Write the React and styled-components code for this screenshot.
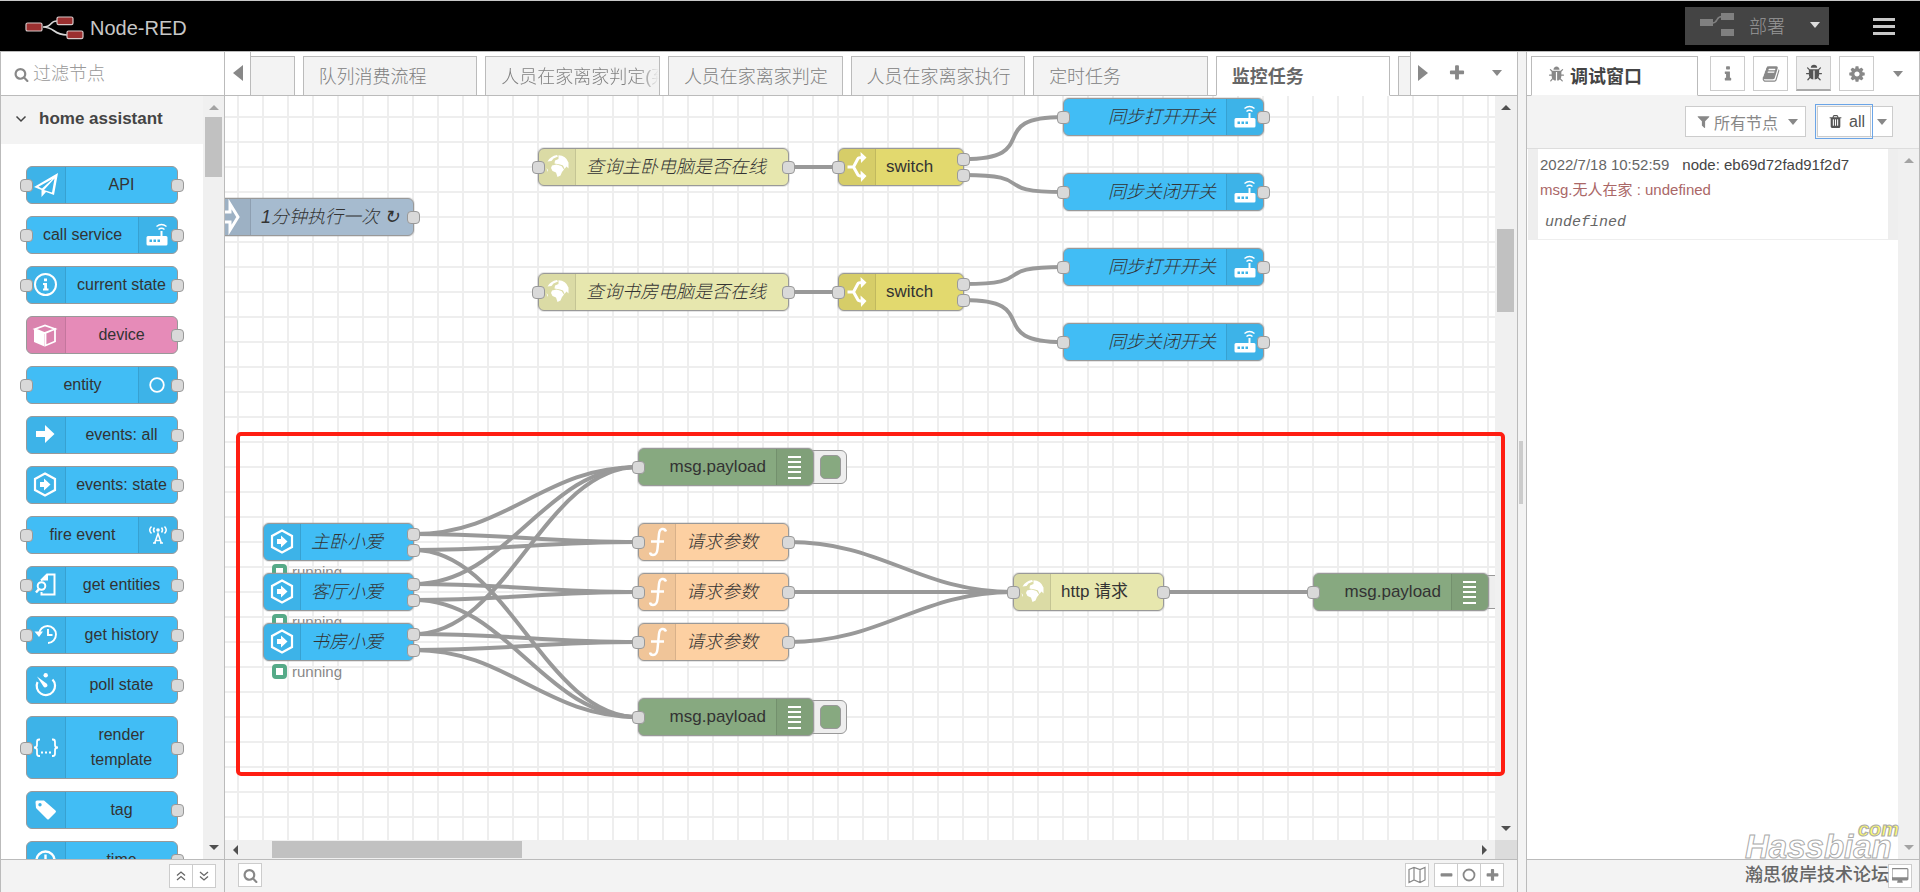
import styled, { createGlobalStyle, css } from "styled-components";

const GlobalStyle = createGlobalStyle`
  *,
  *::before {
    box-sizing: border-box;
  }

  body {
    margin: 0;
    background: #f3f3f3;
    color: #333;
    font-family: "Liberation Sans", Arial, "Noto Sans CJK SC", sans-serif;
    font-size: 17px;
  }

  button,
  input {
    font: inherit;
    color: inherit;
    margin: 0;
    padding: 0;
    border: 0;
    background: none;
  }
`;

const BLUE = "#41bdf5";
const PINK = "#e68bb8";
const GREEN = "#87a980";
const ORANGE = "#fdd0a2";
const KHAKI = "#e7e7ae";
const YELLOW = "#e2d96e";
const STEEL = "#a6bbcf";

/* ---------- icons ---------- */

const FA_PATHS = {
  search:
    "M1216 832q0-185-131.5-316.5t-316.5-131.5-316.5 131.5-131.5 316.5 131.5 316.5 316.5 131.5 316.5-131.5 131.5-316.5zm512 832q0 52-38 90t-90 38q-54 0-90-38l-343-342q-179 124-399 124-143 0-273.5-55.5t-225-150-150-225-55.5-273.5 55.5-273.5 150-225 225-150 273.5-55.5 273.5 55.5 225 150 150 225 55.5 273.5q0 220-124 399l343 343q37 37 37 90z",
  plus: "M1600 736v192q0 40-28 68t-68 28h-416v416q0 40-28 68t-68 28h-192q-40 0-68-28t-28-68v-416h-416q-40 0-68-28t-28-68v-192q0-40 28-68t68-28h416v-416q0-40 28-68t68-28h192q40 0 68 28t28 68v416h416q40 0 68 28t28 68z",
  minus:
    "M1600 736v192q0 40-28 68t-68 28h-1216q-40 0-68-28t-28-68v-192q0-40 28-68t68-28h1216q40 0 68 28t28 68z",
  bug: "M1696 960q0 26-19 45t-45 19h-224q0 171-67 290l208 209q19 19 19 45t-19 45q-18 19-45 19t-45-19l-198-197q-5 5-15 13t-42 28.5-65 36.5-82 29-97 13v-896h-128v896q-51 0-101.5-13.5t-87-33-66-39-43.5-32.5l-15-14-183 207q-20 21-48 21-24 0-43-16-19-18-20.5-44.5t15.5-46.5l202-227q-58-114-58-274h-224q-26 0-45-19t-19-45 19-45 45-19h224v-294l-173-173q-19-19-19-45t19-45 45-19 45 19l173 173h844l173-173q19-19 45-19t45 19 19 45-19 45l-173 173v294h224q26 0 45 19t19 45zm-480-576h-640q0-133 93.5-226.5t226.5-93.5 226.5 93.5 93.5 226.5z",
  info: "M1216 1344v128q0 26-19 45t-45 19h-512q-26 0-45-19t-19-45v-128q0-26 19-45t45-19h64v-384h-64q-26 0-45-19t-19-45v-128q0-26 19-45t45-19h384q26 0 45 19t19 45v576h64q26 0 45 19t19 45zm-128-1152v192q0 26-19 45t-45 19h-256q-26 0-45-19t-19-45v-192q0-26 19-45t45-19h256q26 0 45 19t19 45z",
  book: "M1703 478q40 57 18 129l-275 906q-19 64-76.5 107.5t-122.5 43.5h-923q-77 0-148.5-53.5t-99.5-131.5q-24-67-2-127 0-4 3-27t4-37q1-8-3-21.5t-3-19.5q2-11 8-21t16.5-23.5 16.5-23.5q23-38 45-91.5t30-91.5q3-10 .5-30t-.5-28q3-11 17-28t17-23q21-36 42-92t25-90q1-9-2.5-32t.5-28q4-13 22-30.5t22-22.5q19-26 42.5-84.5t27.5-96.5q1-8-3-25.5t-2-26.5q2-8 9-18t18-23 17-21q8-12 16.5-30.5t15-35 16-36 19.5-32 26.5-23.5 36-11.5 47.5 5.5l-1 3q38-9 51-9h761q74 0 114 56t18 130l-274 906q-36 119-71.5 153.5t-128.5 34.5h-869q-27 0-38 15-11 16-1 43 24 70 144 70h923q29 0 56-15.5t35-41.5l300-987q7-22 5-57 38 15 59 43zm-1064 2q-4 13 2 22.5t20 9.5h608q13 0 25.5-9.5t16.5-22.5l21-64q4-13-2-22.5t-20-9.5h-608q-13 0-25.5 9.5t-16.5 22.5zm-83 256q-4 13 2 22.5t20 9.5h608q13 0 25.5-9.5t16.5-22.5l21-64q4-13-2-22.5t-20-9.5h-608q-13 0-25.5 9.5t-16.5 22.5z",
  cog: "M1152 896q0-106-75-181t-181-75-181 75-75 181 75 181 181 75 181-75 75-181zm512-109v222q0 12-8 23t-20 13l-185 28q-19 54-39 91 35 50 107 138 10 12 10 25t-9 23q-27 37-99 108t-94 71q-12 0-26-9l-138-108q-44 23-91 38-16 136-29 186-7 28-36 28h-222q-14 0-24.5-8.5t-11.5-21.5l-28-184q-49-16-90-37l-141 107q-10 9-25 9-14 0-25-11-126-114-165-168-7-10-7-23 0-12 8-23 15-21 51-66.5t54-70.5q-27-50-41-99l-183-27q-13-2-21-12.5t-8-23.5v-222q0-12 8-23t19-13l186-28q14-46 39-92-40-57-107-138-10-12-10-24 0-10 9-23 26-36 98.5-107.5t94.5-71.5q13 0 26 10l138 107q44-23 91-38 16-136 29-186 7-28 36-28h222q14 0 24.5 8.5t11.5 21.5l28 184q49 16 90 37l142-107q9-9 24-9 13 0 25 10 129 119 165 170 7 8 7 22 0 12-8 23-15 21-51 66.5t-54 70.5q26 50 41 98l183 28q13 2 21 12.5t8 23.5z",
  filter:
    "M1595 295q17 41-14 70l-493 493v742q0 42-39 59-13 5-25 5-27 0-45-19l-256-256q-19-19-19-45v-486l-493-493q-31-29-14-70 17-39 59-39h1280q42 0 59 39z",
  trash:
    "M704 1376v-704q0-14-9-23t-23-9h-64q-14 0-23 9t-9 23v704q0 14 9 23t23 9h64q14 0 23-9t9-23zm256 0v-704q0-14-9-23t-23-9h-64q-14 0-23 9t-9 23v704q0 14 9 23t23 9h64q14 0 23-9t9-23zm256 0v-704q0-14-9-23t-23-9h-64q-14 0-23 9t-9 23v704q0 14 9 23t23 9h64q14 0 23-9t9-23zm-544-992h448l-48-117q-7-9-17-11h-317q-10 2-17 11zm928 32v64q0 14-9 23t-23 9h-96v948q0 83-47 143.5t-113 60.5h-832q-66 0-113-58.5t-47-141.5v-952h-96q-14 0-23-9t-9-23v-64q0-14 9-23t23-9h309l70-167q15-37 54-63t79-26h320q40 0 79 26t54 63l70 167h309q14 0 23 9t9 23z",
  desktop:
    "M1728 992v-832q0-13-9.5-22.5t-22.5-9.5h-1600q-13 0-22.5 9.5t-9.5 22.5v832q0 13 9.5 22.5t22.5 9.5h1600q13 0 22.5-9.5t9.5-22.5zm128-832v1088q0 66-47 113t-113 47h-544q0 37 16 77.5t32 71 16 43.5q0 26-19 45t-45 19h-512q-26 0-45-19t-19-45q0-14 16-44t32-70 16-78h-544q-66 0-113-47t-47-113v-1088q0-66 47-113t113-47h1600q66 0 113 47t47 113z",
};

const Fa = ({ name, size = 18 }) => (
  <svg width={size} height={size} viewBox="0 0 1792 1792" fill="currentColor" aria-hidden="true">
    <path d={FA_PATHS[name]} />
  </svg>
);

const Logo = () => (
  <svg width="60" height="25" viewBox="0 0 60 25" aria-hidden="true">
    <path d="M18 11C28 11 24 5 32 5M18 11C30 11 28 19 42 19" fill="none" stroke="#d8d8d8" strokeWidth="1.6" />
    <g fill="#9b3030" stroke="#d8c8c8" strokeWidth="1.2">
      <rect x="1" y="7" width="16" height="8" rx="1.6" />
      <rect x="32" y="1" width="16" height="7.6" rx="1.6" />
      <rect x="42" y="15" width="16" height="7.6" rx="1.6" />
    </g>
  </svg>
);

const DeployIcon = () => (
  <svg width="34" height="24" viewBox="0 0 34 24" fill="#808080" aria-hidden="true">
    <rect x="0" y="6" width="13" height="7" />
    <rect x="21" y="0" width="13" height="7" />
    <rect x="21" y="16" width="13" height="7" />
    <path d="M12 10C19 10 15 3.500 22 3.500" fill="none" stroke="#808080" strokeWidth="1.600" />
  </svg>
);

const MapIcon = () => (
  <svg width="18" height="18" viewBox="0 0 18 18" fill="none" stroke="#888" strokeWidth="1.200" aria-hidden="true">
    <path d="M1 3.500 6 1.500 12 3.500 17 1.500V14L12 16.500 6 14 1 16.500ZM6 1.500V14M12 3.500V16.500" />
  </svg>
);

const Chevrons = ({ down }) => (
  <svg width="10" height="10" viewBox="0 0 10 10" fill="none" stroke="#666" strokeWidth="1.300" aria-hidden="true">
    <path d={down ? "M1 1 5 4.500 9 1M1 5.500 5 9 9 5.500" : "M1 4.500 5 1 9 4.500M1 9 5 5.500 9 9"} />
  </svg>
);

const hexagon = (
  <>
    <path d="M19 7.500 29 13V24L19 29.500 9 24V13Z" fill="none" stroke="#fff" strokeWidth="2.200" />
    <path d="M14 16H18V12.500L24.500 18.500 18 24.500V21H14Z" />
  </>
);

// every glyph sits on a 38x38 cell, the size of the icon strip of a node
const GLYPHS = {
  plane: (
    <path
      fillRule="evenodd"
      d="M8 21 32 7 28 29 20 26 15.500 31V24ZM12.500 20.800 16 22.400 26.500 13ZM28.500 12.500 18 24 26 26.600Z"
    />
  ),
  router: (
    <>
      <path
        fillRule="evenodd"
        d="M10 20H22.500V15H24.500V20H28Q29.500 20 29.500 21.500V28Q29.500 29.500 28 29.500H10Q8.500 29.500 8.500 28V21.500Q8.500 20 10 20ZM11.500 23.500V26H14V23.500ZM15.500 23.500V26H18V23.500ZM19.500 23.500V26H22V23.500Z"
      />
      <path d="M20.500 13.500Q23.500 11 26.500 13.500M18.500 10.500Q23.500 6.500 28.500 10.500" fill="none" stroke="#fff" strokeWidth="1.500" />
    </>
  ),
  info: (
    <>
      <circle cx="19.500" cy="18.500" r="10.500" fill="none" stroke="#fff" strokeWidth="2" />
      <path d="M18 12.500H21V15.200H18ZM17 17H21V22.500H22.500V24.500H17V22.500H18.200V19H17Z" />
    </>
  ),
  cube: (
    <>
      <path d="M8 13 18.500 17V30.500L8 26Z" />
      <path d="M9 13 19 9.500 29 13 18.500 17ZM19.500 17 29 13V25.500L19.500 29.500Z" fill="none" stroke="#fff" strokeWidth="1.800" />
    </>
  ),
  circle: <circle cx="19" cy="19" r="6.800" fill="none" stroke="#fff" strokeWidth="1.800" />,
  arrow: <path d="M10 15H19V9L28.500 18 19 27V21H10Z" />,
  hexagon,
  antenna: (
    <>
      <circle cx="20" cy="14" r="1.800" />
      <path
        d="M16.500 27.500 20 17.500 23.500 27.500M17.500 24.500H22.500M15 27H18M22 27H25M16.500 11.500Q14.500 14 16.500 16.500M23.500 11.500Q25.500 14 23.500 16.500M13.500 10.500Q10 14 13.500 17.500M26.500 10.500Q30 14 26.500 17.500"
        fill="none"
        stroke="#fff"
        strokeWidth="1.500"
      />
    </>
  ),
  entities: (
    <g fill="none" stroke="#fff" strokeWidth="2">
      <path d="M15 14.500 21 8.500H28.500V28.500H15.500V26" />
      <path d="M15 14.500 22 8V14.500Z" fill="#fff" stroke="none" />
      <circle cx="15.500" cy="20" r="3.800" />
      <path d="M13 23 10 26.500" strokeWidth="2.500" />
    </g>
  ),
  history: (
    <>
      <path d="M13 18A8.500 8.500 0 1 1 22 27M22 13V19H26.500" fill="none" stroke="#fff" strokeWidth="1.900" />
      <path d="M8.500 15.500 17 15.500 13 21Z" />
    </>
  ),
  timer: (
    <>
      <path d="M11.500 16A9.200 9.200 0 1 0 26.500 13.500" fill="none" stroke="#fff" strokeWidth="2.200" />
      <path d="M11 10.500 20.500 17.500Q22.500 19.500 20.500 21Q18.500 22 17.500 20.500Z" />
      <circle cx="19.700" cy="9.300" r="2.200" />
    </>
  ),
  braces: (
    <>
      <path
        d="M14 10.500H13Q11 10.500 11 13V16Q11 18.500 8 18.500Q11 18.500 11 21V24.500Q11 27 13 27H14M26 10.500H27Q29 10.500 29 13V16Q29 18.500 32 18.500Q29 18.500 29 21V24.500Q29 27 27 27H26"
        fill="none"
        stroke="#fff"
        strokeWidth="1.800"
      />
      <path d="M15 22.500H17V24.500H15ZM19 22.500H21V24.500H19ZM23 22.500H25V24.500H23Z" />
    </>
  ),
  tag: (
    <path
      fillRule="evenodd"
      d="M9.500 11Q9.500 9.500 11 9.500L18 9.500 29.500 19.500Q30.500 20.500 29.500 21.500L23 28Q22 29 21 28L10 17ZM12.300 13.700A1.700 1.700 0 1 0 15.700 13.700A1.700 1.700 0 1 0 12.300 13.700Z"
    />
  ),
  clock: (
    <path
      d="M19.500 13.500V20H16M10.500 19.500A9 9 0 1 1 28.500 19.500A9 9 0 1 1 10.500 19.500Z"
      fill="none"
      stroke="#fff"
      strokeWidth="2.400"
    />
  ),
  globe: (
    <>
      <path d="M9.500 13.500Q12.500 8 19 7L20 8.500 15.500 10.500 13.500 13ZM20.500 7.200Q28 7.500 30.500 14.500L30.500 20.500 28.500 18.500 26.500 21 25 17.500 22 16.500 16.500 15.500 17 12.500 20.500 11Z" />
      <path d="M14 17.500 18.500 16.500 23.500 18 26 21.500 24 24 22.500 27.500 19.500 29 18 24.500 14.500 23 13 20Z" />
      <path d="M8.500 20 10 22 9.500 24Z" />
    </>
  ),
  split: (
    <>
      <path d="M9.500 19H15.500L20 10.500Q20.500 9.500 24 9.500M15.500 19 20 27Q20.500 28 24 28" fill="none" stroke="#fff" strokeWidth="3" />
      <path d="M22.500 4 28.500 9.500 23 15ZM22.500 22.500 28.500 28 23 34Z" />
    </>
  ),
  func: (
    <path
      d="M28 8.500Q27 5.500 24 6Q21.500 6.500 21 11L19.500 26Q19 32 15 32Q12.500 32 12 29.500M13 18.500H26"
      fill="none"
      stroke="#fff"
      strokeWidth="2.500"
    />
  ),
  lines: <path d="M12 9H25M12 14H25M12 19H25M12 24H25M12 30H25" fill="none" stroke="#fff" strokeWidth="1.800" />,
  inject: <path d="M2 14H17V6L25 19 17 32V24H2" fill="none" stroke="#fff" strokeWidth="3" />,
};

const Glyph = ({ name }) => (
  <svg width="38" height="38" viewBox="0 0 38 38" fill="#fff" aria-hidden="true">
    {GLYPHS[name]}
  </svg>
);

/* ---------- shared parts ---------- */

const Caret = styled.span`
  width: 0;
  height: 0;
  border: 5px solid transparent;
  border-bottom-width: 0;
  border-top: 6px solid ${(p) => p.$color || "#888"};
`;

const SmallButton = styled.button`
  display: flex;
  align-items: center;
  justify-content: center;
  width: 24px;
  height: 24px;
  border: 1px solid #ccc;
  background: #fff;
  color: #888;

  & + & {
    margin-left: -1px;
  }
`;

const Footer = styled.footer`
  display: flex;
  align-items: center;
  height: 33px;
  flex: none;
  border-top: 1px solid #bbb;
  background: #f3f3f3;
`;

const PaletteFooter = styled(Footer)`
  justify-content: flex-end;
  padding: 0 8px;
`;

const Bar = styled.div`
  display: flex;
  flex: none;
  align-items: center;
  justify-content: space-between;
  background: #f0f0f0;
  ${(p) =>
    p.$horizontal
      ? css`
          height: 19px;
          flex: 1;
          padding: 0 8px;
        `
      : css`
          width: 21px;
          flex-direction: column;
          padding: 9px 0;
        `}
`;

const Thumb = styled.div`
  background: #c1c1c1;
  ${(p) =>
    p.$horizontal
      ? css`
          width: 250px;
          height: 17px;
          margin-left: 34px;
          margin-right: auto;
        `
      : css`
          width: 17px;
          height: ${p.$length}px;
          margin-top: ${p.$offset}px;
          margin-bottom: auto;
        `}
`;

const arrowSides = {
  up: "border-bottom: 5px solid; border-top: 0;",
  down: "border-top: 5px solid; border-bottom: 0;",
  left: "border-right: 5px solid; border-left: 0;",
  right: "border-left: 5px solid; border-right: 0;",
};

const Arrow = styled.i`
  width: 0;
  height: 0;
  color: ${(p) => (p.$dim ? "#a3a3a3" : "#505050")};
  border: 5px solid transparent;
  ${(p) => arrowSides[p.$to]}
  ${(p) =>
    p.$to === "up" || p.$to === "down"
      ? "border-left-color: transparent; border-right-color: transparent;"
      : "border-top-color: transparent; border-bottom-color: transparent;"}
`;

/* ---------- page frame ---------- */

const Page = styled.div`
  display: flex;
  flex-direction: column;
  height: 100vh;
  min-height: 500px;
  overflow: hidden;
`;

const Header = styled.header`
  display: flex;
  align-items: center;
  height: 51px;
  flex: none;
  padding: 0 25px;
  border-top: 1px solid #c8c8c8;
  background: #000;
`;

const Brand = styled.h1`
  display: flex;
  align-items: center;
  gap: 5px;
  margin: 0 auto 0 0;
  padding-top: 4px;
  color: #c7c7c7;
  font-size: 20px;
  font-weight: 400;
`;

const DeployButton = styled.button`
  display: flex;
  align-items: center;
  width: 144px;
  height: 38px;
  padding: 0 9px 2px 15px;
  gap: 15px;
  background: #444;
  color: #999;
  font-size: 18px;
  font-weight: 300;

  ${Caret} {
    margin-left: auto;
  }
`;

const MenuButton = styled.button`
  display: flex;
  flex-direction: column;
  gap: 4px;
  width: 22px;
  margin-left: 44px;

  span {
    height: 3px;
    background: #c7c7c7;
  }
`;

const Main = styled.main`
  display: grid;
  grid-template-columns: 225px minmax(0, 1fr) 8px 394px;
  flex: 1;
  min-height: 0;
`;

const Panel = styled.section`
  display: flex;
  flex-direction: column;
  min-width: 0;
  min-height: 0;
  border: solid #bbb;
  border-width: ${(p) => p.$borders};
  background: #fff;
`;

const Separator = styled.div`
  display: flex;
  align-items: center;
  padding-left: 1px;
  border-top: 1px solid #bbb;

  &::before {
    content: "";
    width: 4px;
    height: 63px;
    background: #ccc;
  }
`;

/* ---------- palette ---------- */

const SearchBox = styled.label`
  display: flex;
  align-items: center;
  gap: 4px;
  height: 44px;
  flex: none;
  padding: 2px 13px 0;
  border-bottom: 1px solid #bbb;
  color: #888;

  input {
    flex: 1;
    min-width: 0;
    font-size: 18px;
    font-weight: 300;
    outline: 0;
  }

  input::placeholder {
    color: #999;
    opacity: 1;
  }
`;

const PaletteBody = styled.div`
  display: flex;
  flex: 1;
  min-height: 0;
`;

const PaletteScroll = styled.div`
  flex: 1;
  overflow: hidden;
`;

const CategoryHeader = styled.button`
  display: flex;
  align-items: center;
  gap: 12px;
  width: 100%;
  height: 48px;
  padding: 0 14px 2px;
  background: #f3f3f3;
  color: #444;
  font-weight: 700;
`;

const NodeList = styled.ul`
  display: flex;
  flex-direction: column;
  gap: 12px;
  width: 152px;
  margin: 22px 0 0 25px;
  padding: 0;
  list-style: none;
`;

const IconStrip = styled.span`
  display: flex;
  align-items: center;
  width: 37px;
  flex: none;
  overflow: hidden;
  background: rgba(0, 0, 0, 0.05);
  ${(p) =>
    p.$right
      ? "border-left: 1px solid rgba(0, 0, 0, 0.1); border-radius: 0 5px 5px 0;"
      : "border-right: 1px solid rgba(0, 0, 0, 0.1); border-radius: 5px 0 0 5px;"}

  svg {
    flex: none;
    margin: -1px;
  }
`;

const PaletteNode = styled.li`
  position: relative;
  display: flex;
  flex-direction: ${(p) => (p.$iconRight ? "row-reverse" : "row")};
  flex: none;
  height: ${(p) => (p.$tall ? "63px" : "38px")};
  border: 1px solid #999;
  border-radius: 6px;
  background: ${(p) => p.$color};
  font-size: 16px;
  line-height: 25px;

  ${IconStrip} {
    width: 39px;
  }
`;

const PaletteLabel = styled.span`
  display: flex;
  align-items: center;
  justify-content: center;
  flex: 1;
  padding-bottom: 1px;
  text-align: center;
`;

const Port = styled.i`
  position: absolute;
  top: calc(50% - ${(p) => 6 - (p.$shift || 0)}px);
  ${(p) => (p.$side === "in" ? "left" : "right")}: -7px;
  width: 13px;
  height: 13px;
  border: 1px solid #999;
  border-radius: 4px;
  background: #d9d9d9;
`;

/* ---------- workspace ---------- */

const TabBar = styled.nav`
  display: flex;
  height: 44px;
  flex: none;
  border-bottom: 1px solid #bbb;
`;

const TabScroll = styled.button`
  display: flex;
  align-items: center;
  justify-content: center;
  width: 26px;
  padding-bottom: 2px;
  border-right: 1px solid #bbb;

  i {
    border-width: 8px;
    border-right-width: 10px;
    color: #888;
  }
`;

const TabViewport = styled.div`
  flex: 1;
  min-width: 0;
  overflow: hidden;
  margin-bottom: -1px;
`;

const TabList = styled.div`
  display: flex;
  gap: 8px;
  width: calc(100% + 294px);
  height: 40px;
  margin: 4px 0 0 -131px;
`;

const Tab = styled.button`
  flex: 1;
  min-width: 0;
  overflow: hidden;
  padding: 0 0 3px 15px;
  border: 1px solid #bbb;
  background: #f3f3f3;
  color: #808080;
  font-size: 18px;
  font-weight: 300;
  text-align: left;
  white-space: nowrap;
  ${(p) =>
    p.$fade &&
    css`
      span {
        display: block;
        mask-image: linear-gradient(to right, #000 138px, transparent 158px);
      }
    `}
  ${(p) =>
    p.$active &&
    css`
      border-bottom-color: #fff;
      background: #fff;
      color: #666;
      font-weight: 700;
    `}
`;

const TabTools = styled.div`
  display: flex;
  align-items: center;
  gap: 20px;
  width: 107px;
  padding: 0 15px 2px 7px;
  border-left: 1px solid #bbb;
  color: #888;

  button {
    display: flex;
  }

  button:last-child {
    margin-left: auto;
  }

  i {
    border-width: 8px;
    border-left-width: 10px;
    color: #888;
  }
`;

const CanvasArea = styled.div`
  position: relative;
  display: grid;
  grid-template-columns: minmax(0, 1fr) 22px;
  grid-template-rows: minmax(0, 1fr) 19px;
  flex: 1;
  min-height: 0;
  background: #f0f0f0;
`;

const Canvas = styled.div`
  position: relative;
  overflow: hidden;
  background-color: #fff;
  background-image: linear-gradient(to right, #eee 2px, transparent 2px),
    linear-gradient(to bottom, #eee 2px, transparent 2px);
  background-size: 25px 25px;
  background-position: 12px 20px;
`;

const Corner = styled.div`
  background: #dcdcdc;
`;

const Wires = styled.svg`
  position: absolute;
  inset: 0;
  width: 100%;
  height: 100%;
  fill: none;
  stroke: #999;
  stroke-width: 4px;
`;

const FlowNode = styled.div`
  position: absolute;
  left: ${(p) => p.$x}px;
  top: ${(p) => p.$y}px;
  width: ${(p) => p.$w}px;
  height: 38px;
`;

const FlowBody = styled.div`
  position: relative;
  display: flex;
  flex-direction: ${(p) => (p.$iconRight ? "row-reverse" : "row")};
  height: 100%;
  border: 1px solid #999;
  border-radius: 6px;
  background: ${(p) => p.$color};
  box-shadow: 0 0 0 1px rgba(153, 153, 153, 0.25);
`;

const FlowLabel = styled.span`
  flex: 1;
  padding: 0 10px;
  line-height: 36px;
  white-space: nowrap;
  text-align: ${(p) => (p.$right ? "right" : "left")};
  ${(p) =>
    p.$named &&
    css`
      font-size: 18px;
      font-style: italic;
      font-weight: 300;
    `}
`;

const ToggleButton = styled.button`
  position: absolute;
  left: calc(100% - 6px);
  top: 2px;
  display: flex;
  align-items: center;
  justify-content: flex-end;
  width: 39px;
  height: 34px;
  padding-right: 5px;
  border: 1px solid #999;
  border-radius: 6px;
  background: #eee;

  span {
    width: 21px;
    height: 24px;
    border: 1px solid #999;
    border-radius: 5px;
    background: ${GREEN};
  }
`;

const Status = styled.div`
  position: absolute;
  left: 9px;
  top: 41px;
  display: flex;
  align-items: center;
  gap: 5px;
  height: 15px;
  color: #888;
  font-size: 15px;

  &::before {
    content: "";
    width: 15px;
    height: 15px;
    border: 4px solid #5a8;
    border-radius: 4px;
  }
`;

const Highlight = styled.div`
  position: absolute;
  left: 11px;
  right: 12px;
  top: 336px;
  height: 344px;
  border: 4px solid #ff1e12;
  border-radius: 5px;
  pointer-events: none;
`;

const WorkspaceFooter = styled(Footer)`
  padding: 0 13px 2px;
`;

const ViewTools = styled.div`
  display: flex;
  margin-left: auto;

  ${SmallButton}:first-child {
    margin-right: 6px;
  }
`;

/* ---------- sidebar ---------- */

const SideTabs = styled.nav`
  display: flex;
  align-items: center;
  height: 44px;
  flex: none;
  padding-left: 4px;
  border-bottom: 1px solid #bbb;
`;

const SideTab = styled.button`
  display: flex;
  align-items: center;
  gap: 5px;
  align-self: flex-end;
  width: 167px;
  height: 40px;
  margin: 0 12px -1px 0;
  padding: 0 0 3px 16px;
  border: 1px solid #bbb;
  border-bottom-color: #f3f3f3;
  background: #fff;
  color: #444;
  font-size: 18px;
  font-weight: 700;

  svg {
    color: #888;
  }
`;

const IconButton = styled.button`
  display: flex;
  align-items: center;
  justify-content: center;
  width: 35px;
  height: 35px;
  margin-right: 8px;
  border: 1px solid #ccc;
  color: #888;
  ${(p) =>
    p.$active &&
    css`
      border-bottom: 2px solid #aaa;
      background: #efefef;
      color: #555;
    `}
`;

const SideCaret = styled.button`
  margin-left: 11px;
`;

const DebugToolbar = styled.div`
  display: flex;
  align-items: center;
  justify-content: flex-end;
  height: 53px;
  flex: none;
  padding: 0 26px 1px 0;
  border-bottom: 1px solid #ddd;
  background: #f3f3f3;
`;

const ToolButton = styled.button`
  display: flex;
  align-items: center;
  gap: ${(p) => (p.$tight ? "6px" : "3px")};
  width: ${(p) => p.$width}px;
  height: 31px;
  padding: 0 ${(p) => (p.$tight ? 0 : 7)}px 0 10px;
  border: 1px solid #ccc;
  background: #fff;
  color: #888;
  font-size: 16px;

  ${Caret} {
    margin-left: auto;
  }
`;

const ClearGroup = styled.div`
  display: flex;
  margin-left: 11px;

  ${ToolButton}:first-child {
    outline: 1px solid #6ba5e7;
    outline-offset: 1px;
    color: #555;
    z-index: 1;
  }

  ${ToolButton}:last-child {
    margin-left: -1px;
    padding: 0 6px;
  }
`;

const DebugBody = styled.div`
  display: flex;
  justify-content: space-between;
  flex: 1;
  min-height: 0;
`;

const Messages = styled.div`
  flex: 1;
  padding-left: 1px;
`;

const Message = styled.article`
  height: 91px;
  padding: 3px 2px 0;
  border: solid #eee;
  border-width: 0 10px 1px;
  color: #666;
  font-size: 15px;
  line-height: 25px;
  white-space: nowrap;
`;

const MessageMeta = styled.div`
  display: flex;
  gap: 13px;

  a {
    color: #444;
    text-decoration: none;
  }
`;

const MessageTopic = styled.div`
  color: #aa6767;
`;

const MessageValue = styled.div`
  padding: 8px 5px 0;
  font-family: "Liberation Mono", monospace;
  font-style: italic;
`;

const SideFooter = styled(Footer)`
  justify-content: flex-end;
  padding: 0 7px;
`;

const Watermark = styled.div`
  position: absolute;
  right: 21px;
  bottom: 5px;
  display: flex;
  flex-direction: column;
  width: 154px;
  color: #fff;
  font-size: 33px;
  font-style: italic;
  font-weight: 700;
  line-height: 33px;
  -webkit-text-stroke: 1px #aaa;
  pointer-events: none;

  sup {
    align-self: flex-end;
    height: 11px;
    color: #fdfa72;
    font-size: 20px;
    line-height: 20px;
  }

  small {
    color: #666;
    font-size: 18px;
    font-style: normal;
    font-weight: 500;
    line-height: 24px;
    -webkit-text-stroke: 0;
  }
`;

/* ---------- data ---------- */

const paletteNodes = [
  { label: "API", icon: "plane", input: true },
  { label: "call service", icon: "router", input: true, iconRight: true },
  { label: "current state", icon: "info", input: true },
  { label: "device", icon: "cube", color: PINK },
  { label: "entity", icon: "circle", input: true, iconRight: true },
  { label: "events: all", icon: "arrow" },
  { label: "events: state", icon: "hexagon" },
  { label: "fire event", icon: "antenna", input: true, iconRight: true },
  { label: "get entities", icon: "entities", input: true },
  { label: "get history", icon: "history", input: true },
  { label: "poll state", icon: "timer" },
  { label: "render template", icon: "braces", input: true, tall: true },
  { label: "tag", icon: "tag" },
  { label: "time", icon: "clock" },
];

const tabs = [
  { label: "" },
  { label: "队列消费流程" },
  { label: "人员在家离家判定(弃用)", fade: true },
  { label: "人员在家离家判定" },
  { label: "人员在家离家执行" },
  { label: "定时任务" },
  { label: "监控任务", active: true },
  { label: "" },
];

const kinds = {
  inject: { color: STEEL, icon: "inject", outputs: 1 },
  http: { color: KHAKI, icon: "globe", input: true, outputs: 1 },
  switch: { color: YELLOW, icon: "split", input: true, outputs: 2 },
  call: { color: BLUE, icon: "router", input: true, outputs: 1, iconRight: true },
  event: { color: BLUE, icon: "hexagon", outputs: 2 },
  func: { color: ORANGE, icon: "func", input: true, outputs: 1 },
  debug: { color: GREEN, icon: "lines", input: true, outputs: 0, iconRight: true },
};

const flowNodes = [
  { id: "inject", kind: "inject", x: -12, y: 102, w: 201, label: "1分钟执行一次 ↻", named: true },
  { id: "q1", kind: "http", x: 313, y: 52, w: 251, label: "查询主卧电脑是否在线", named: true },
  { id: "q2", kind: "http", x: 313, y: 177, w: 251, label: "查询书房电脑是否在线", named: true },
  { id: "s1", kind: "switch", x: 613, y: 52, w: 126, label: "switch" },
  { id: "s2", kind: "switch", x: 613, y: 177, w: 126, label: "switch" },
  { id: "on1", kind: "call", x: 838, y: 2, w: 201, label: "同步打开开关", named: true },
  { id: "off1", kind: "call", x: 838, y: 77, w: 201, label: "同步关闭开关", named: true },
  { id: "on2", kind: "call", x: 838, y: 152, w: 201, label: "同步打开开关", named: true },
  { id: "off2", kind: "call", x: 838, y: 227, w: 201, label: "同步关闭开关", named: true },
  { id: "e1", kind: "event", x: 38, y: 427, w: 151, label: "主卧小爱", named: true, status: "running" },
  { id: "e2", kind: "event", x: 38, y: 477, w: 151, label: "客厅小爱", named: true, status: "running" },
  { id: "e3", kind: "event", x: 38, y: 527, w: 151, label: "书房小爱", named: true, status: "running" },
  { id: "d1", kind: "debug", x: 413, y: 352, w: 176, label: "msg.payload" },
  { id: "f1", kind: "func", x: 413, y: 427, w: 151, label: "请求参数", named: true },
  { id: "f2", kind: "func", x: 413, y: 477, w: 151, label: "请求参数", named: true },
  { id: "f3", kind: "func", x: 413, y: 527, w: 151, label: "请求参数", named: true },
  { id: "d2", kind: "debug", x: 413, y: 602, w: 176, label: "msg.payload" },
  { id: "req", kind: "http", x: 788, y: 477, w: 151, label: "http 请求" },
  { id: "d3", kind: "debug", x: 1088, y: 477, w: 176, label: "msg.payload" },
];

// [source, output index, target]
const wires = [
  ["q1", 0, "s1"],
  ["q2", 0, "s2"],
  ["s1", 0, "on1"],
  ["s1", 1, "off1"],
  ["s2", 0, "on2"],
  ["s2", 1, "off2"],
  ["e1", 0, "d1"],
  ["e1", 0, "f1"],
  ["e1", 1, "f1"],
  ["e1", 1, "d2"],
  ["e2", 0, "d1"],
  ["e2", 0, "f2"],
  ["e2", 1, "f2"],
  ["e2", 1, "d2"],
  ["e3", 0, "d1"],
  ["e3", 0, "f3"],
  ["e3", 1, "f3"],
  ["e3", 1, "d2"],
  ["f1", 0, "req"],
  ["f2", 0, "req"],
  ["f3", 0, "req"],
  ["req", 0, "d3"],
];

const outputShift = (count, index) => (count === 2 ? index * 16 - 8 : 0);

function wirePath([from, output, to]) {
  const a = flowNodes.find((n) => n.id === from);
  const b = flowNodes.find((n) => n.id === to);
  const x1 = a.x + a.w;
  const y1 = a.y + 19 + outputShift(kinds[a.kind].outputs, output);
  const x2 = b.x;
  const y2 = b.y + 19;
  const distance = Math.hypot(x2 - x1, y2 - y1);
  const reach = 0.75 * Math.min(distance, 125);
  return `M${x1} ${y1}C${x1 + reach} ${y1} ${x2 - reach} ${y2} ${x2} ${y2}`;
}

/* ---------- components ---------- */

const Palette = () => (
  <Panel $borders="1px 1px 0 1px">
    <SearchBox>
      <Fa name="search" size={15} />
      <input type="text" placeholder="过滤节点" aria-label="过滤节点" />
    </SearchBox>
    <PaletteBody>
      <PaletteScroll>
        <CategoryHeader>
          <svg width="12" height="8" viewBox="0 0 12 8" fill="none" stroke="#444" strokeWidth="1.500" aria-hidden="true">
            <path d="M1.500 1.500 6 6 10.500 1.500" />
          </svg>
          home assistant
        </CategoryHeader>
        <NodeList>
          {paletteNodes.map((node) => (
            <PaletteNode key={node.label} $color={node.color || BLUE} $tall={node.tall} $iconRight={node.iconRight}>
              <IconStrip $right={node.iconRight}>
                <Glyph name={node.icon} />
              </IconStrip>
              <PaletteLabel>{node.label}</PaletteLabel>
              {node.input && <Port $side="in" />}
              <Port $side="out" />
            </PaletteNode>
          ))}
        </NodeList>
      </PaletteScroll>
      <Bar>
        <Arrow $to="up" $dim />
        <Thumb $offset={7} $length={60} />
        <Arrow $to="down" />
      </Bar>
    </PaletteBody>
    <PaletteFooter>
      <SmallButton aria-label="collapse all">
        <Chevrons />
      </SmallButton>
      <SmallButton aria-label="expand all">
        <Chevrons down />
      </SmallButton>
    </PaletteFooter>
  </Panel>
);

const FlowItem = ({ node }) => {
  const { color, icon, input, outputs, iconRight } = kinds[node.kind];
  return (
    <FlowNode $x={node.x} $y={node.y} $w={node.w}>
      {node.kind === "debug" && (
        <ToggleButton aria-label="toggle debug output">
          <span />
        </ToggleButton>
      )}
      <FlowBody $color={color} $iconRight={iconRight}>
        <IconStrip $right={iconRight}>
          <Glyph name={icon} />
        </IconStrip>
        <FlowLabel $right={iconRight} $named={node.named}>
          {node.label}
        </FlowLabel>
        {input && <Port $side="in" />}
        {Array.from({ length: outputs }, (_, i) => (
          <Port key={i} $side="out" $shift={outputShift(outputs, i)} />
        ))}
      </FlowBody>
      {node.status && <Status>{node.status}</Status>}
    </FlowNode>
  );
};

const Workspace = () => (
  <Panel $borders="1px 1px 0 0">
    <TabBar>
      <TabScroll aria-label="scroll tabs left">
        <Arrow $to="left" />
      </TabScroll>
      <TabViewport>
        <TabList role="tablist">
          {tabs.map((tab, i) => (
            <Tab key={i} role="tab" aria-selected={!!tab.active} $active={tab.active} $fade={tab.fade}>
              <span>{tab.label}</span>
            </Tab>
          ))}
        </TabList>
      </TabViewport>
      <TabTools>
        <button aria-label="scroll tabs right">
          <Arrow $to="right" />
        </button>
        <button aria-label="add flow">
          <Fa name="plus" size={18} />
        </button>
        <button aria-label="list flows">
          <Caret />
        </button>
      </TabTools>
    </TabBar>
    <CanvasArea>
      <Canvas>
        <Wires aria-hidden="true">
          {wires.map((wire) => (
            <path key={wire.join("-")} d={wirePath(wire)} />
          ))}
        </Wires>
        {flowNodes.map((node) => (
          <FlowItem key={node.id} node={node} />
        ))}
      </Canvas>
      <Bar>
        <Arrow $to="up" />
        <Thumb $offset={119} $length={83} />
        <Arrow $to="down" />
      </Bar>
      <Bar $horizontal>
        <Arrow $to="left" />
        <Thumb $horizontal />
        <Arrow $to="right" />
      </Bar>
      <Corner />
      <Highlight />
    </CanvasArea>
    <WorkspaceFooter>
      <SmallButton aria-label="search flows">
        <Fa name="search" size={15} />
      </SmallButton>
      <ViewTools>
        <SmallButton aria-label="toggle navigator">
          <MapIcon />
        </SmallButton>
        <SmallButton aria-label="zoom out">
          <Fa name="minus" size={15} />
        </SmallButton>
        <SmallButton aria-label="reset zoom">
          <svg width="14" height="14" viewBox="0 0 14 14" fill="none" stroke="#888" strokeWidth="1.800" aria-hidden="true">
            <circle cx="7" cy="7" r="5.500" />
          </svg>
        </SmallButton>
        <SmallButton aria-label="zoom in">
          <Fa name="plus" size={15} />
        </SmallButton>
      </ViewTools>
    </WorkspaceFooter>
  </Panel>
);

const Sidebar = () => (
  <Panel $borders="1px 1px 0 1px">
    <SideTabs>
      <SideTab>
        <Fa name="bug" size={17} />
        调试窗口
      </SideTab>
      <IconButton aria-label="info">
        <Fa name="info" />
      </IconButton>
      <IconButton aria-label="help">
        <Fa name="book" />
      </IconButton>
      <IconButton aria-label="debug" $active>
        <Fa name="bug" />
      </IconButton>
      <IconButton aria-label="configuration">
        <Fa name="cog" />
      </IconButton>
      <SideCaret aria-label="more sidebars">
        <Caret as="div" />
      </SideCaret>
    </SideTabs>
    <DebugToolbar>
      <ToolButton $width={121}>
        <Fa name="filter" size={15} />
        所有节点
        <Caret />
      </ToolButton>
      <ClearGroup>
        <ToolButton $width={54} $tight>
          <Fa name="trash" size={15} />
          all
        </ToolButton>
        <ToolButton $width={23} aria-label="clear options">
          <Caret />
        </ToolButton>
      </ClearGroup>
    </DebugToolbar>
    <DebugBody>
      <Messages>
        <Message>
          <MessageMeta>
            <time>2022/7/18 10:52:59</time>
            <a href="#node">node: eb69d72fad91f2d7</a>
          </MessageMeta>
          <MessageTopic>msg.无人在家 : undefined</MessageTopic>
          <MessageValue>undefined</MessageValue>
        </Message>
      </Messages>
      <Bar>
        <Arrow $to="up" $dim />
        <Arrow $to="down" $dim />
      </Bar>
    </DebugBody>
    <SideFooter>
      <SmallButton aria-label="open in window">
        <svg width="17" height="16" viewBox="0 0 1920 1792" fill="#888" aria-hidden="true">
          <path d={FA_PATHS.desktop} />
        </svg>
      </SmallButton>
    </SideFooter>
  </Panel>
);

export default function App() {
  return (
    <>
      <GlobalStyle />
      <Page>
        <Header>
          <Brand>
            <Logo />
            Node-RED
          </Brand>
          <DeployButton>
            <DeployIcon />
            部署
            <Caret $color="#ddd" />
          </DeployButton>
          <MenuButton aria-label="menu">
            <span />
            <span />
            <span />
          </MenuButton>
        </Header>
        <Main>
          <Palette />
          <Workspace />
          <Separator />
          <Sidebar />
        </Main>
      </Page>
      <Watermark>
        <sup>com</sup>
        Hassbian
        <small>瀚思彼岸技术论坛</small>
      </Watermark>
    </>
  );
}
